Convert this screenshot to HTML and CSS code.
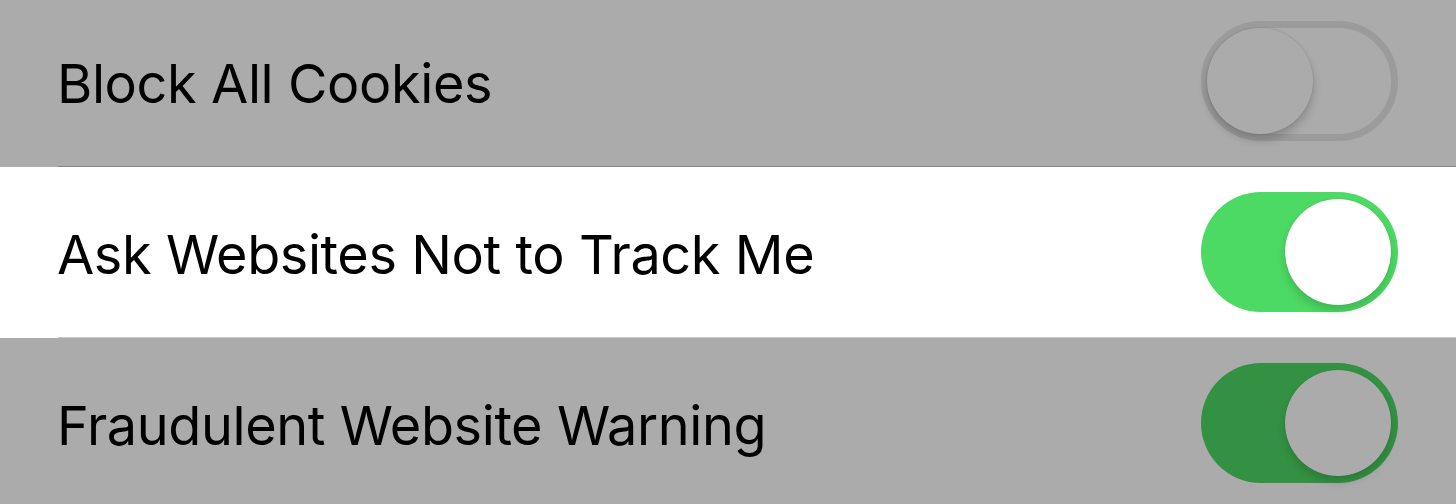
FILE: index.html
```html
<!DOCTYPE html>
<html>
<head>
<meta charset="utf-8">
<link rel="stylesheet" href="styles.css">
</head>
<body>
<div class="list">
  <div class="row dim">
    <span class="label">Block All Cookies</span>
    <span class="switch off"><span class="knob"></span></span>
  </div>
  <div class="row">
    <span class="label">Ask Websites Not to Track Me</span>
    <span class="switch on"><span class="knob"></span></span>
  </div>
  <div class="row dim">
    <span class="label">Fraudulent Website Warning</span>
    <span class="switch on"><span class="knob"></span></span>
  </div>
</div>
</body>
</html>
```
FILE: styles.css
```css
html, body {
  margin: 0;
  padding: 0;
  background: #ababab;
  overflow: hidden;
}
.list {
  margin-top: -4px;
  display: flex;
  flex-direction: column;
}
.row {
  height: 170px;
  display: flex;
  align-items: center;
  justify-content: space-between;
  padding: 0 58px 0 57px;
  background: #fff;
  position: relative;
  border-bottom: 1px solid #fff;
}
.row::after {
  content: "";
  position: absolute;
  left: 58px;
  right: 0;
  bottom: -1px;
  height: 1px;
  background: #c8c7cc;
}
.row.dim {
  filter: brightness(0.67);
}
.label {
  font-family: Inter, "Noto Sans", sans-serif;
  font-size: 54px;
  color: #000;
  letter-spacing: -0.4px;
  padding-top: 4px;
}
.switch {
  width: 197px;
  height: 120px;
  border-radius: 60px;
  box-sizing: border-box;
  display: flex;
  align-items: center;
  position: relative;
}
.switch.off {
  border: 7px solid #e8e8e8;
  background: #fff;
  justify-content: flex-start;
}
.switch.on {
  background: #4cd964;
  justify-content: flex-end;
  padding: 0 7px;
}
.knob {
  width: 106px;
  height: 106px;
  border-radius: 50%;
  background: #fff;
  box-shadow: 0 6px 8px rgba(0,0,0,0.15), 0 0 1px rgba(0,0,0,0.2);
}
.switch.off .knob {
  margin-left: -1px;
  box-shadow: 0 6px 10px rgba(0,0,0,0.2), 0 0 2px rgba(0,0,0,0.15);
}
```
